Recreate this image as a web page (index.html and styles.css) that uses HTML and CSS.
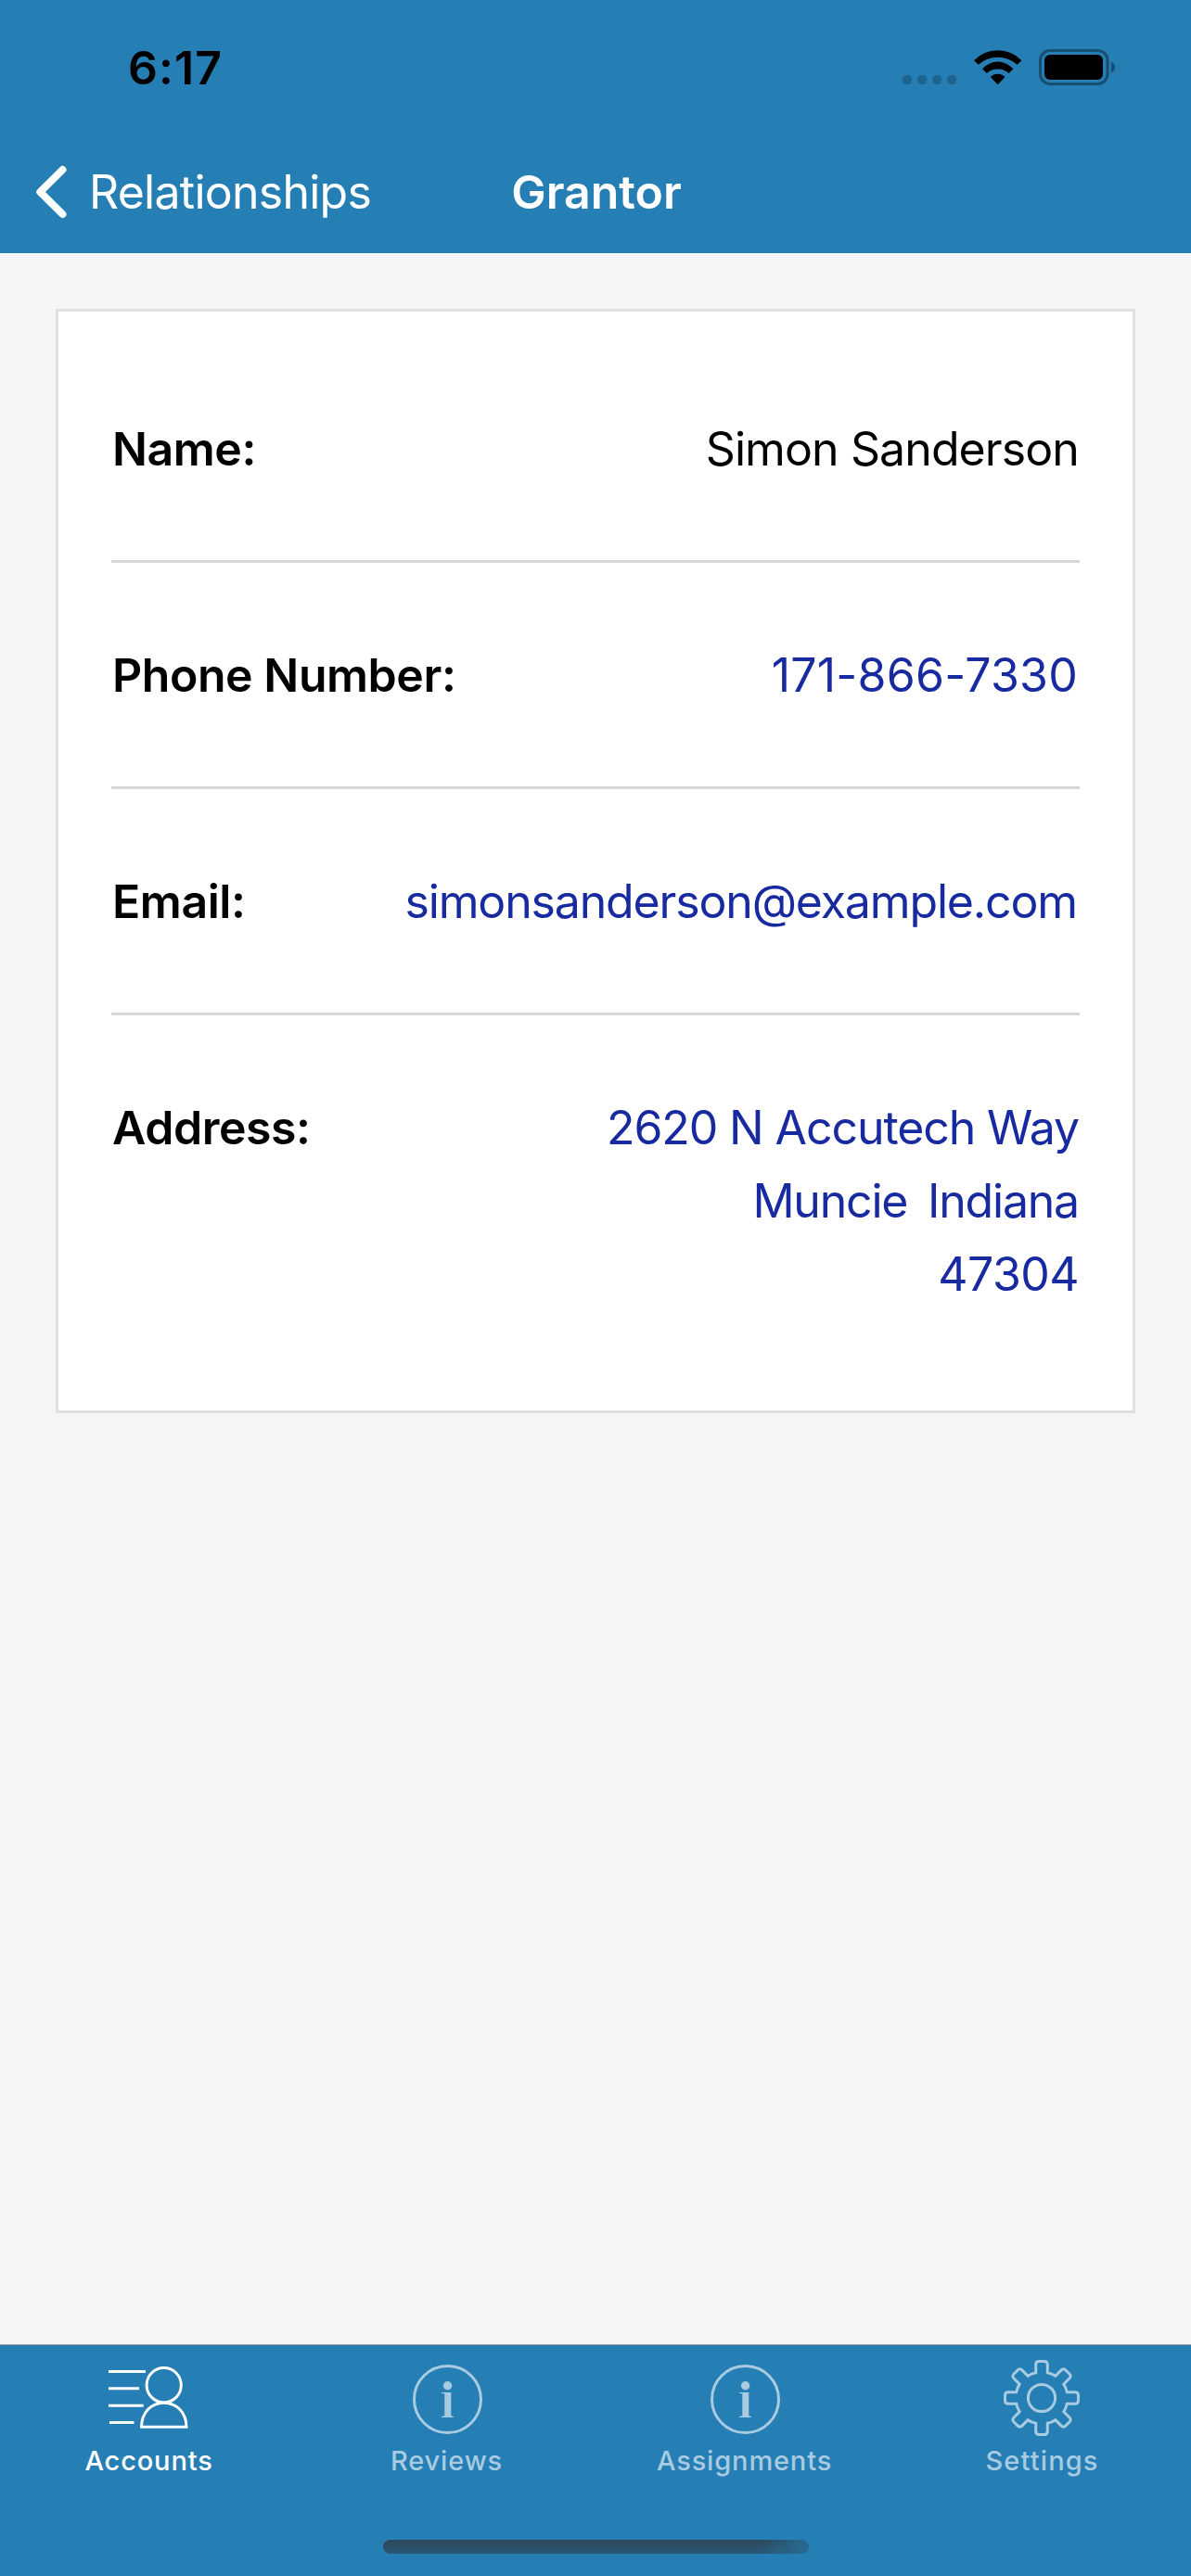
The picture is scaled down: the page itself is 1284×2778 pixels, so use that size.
FILE: index.html
```html
<!DOCTYPE html>
<html lang="en">
<head>
<meta charset="utf-8">
<title>Grantor</title>
<link rel="stylesheet" href="styles.css">
</head>
<body>
<div class="screen">
  <header class="header">
    <div class="status">
      <span class="status__time">6:17</span>
      <div class="status__icons">
        <svg class="status__dots" width="58" height="39" viewBox="0 0 58 39">
          <rect x="0" y="28" width="10" height="10" rx="4.2"/>
          <rect x="16.2" y="28" width="10" height="10" rx="4.2"/>
          <rect x="32.3" y="28" width="10" height="10" rx="4.2"/>
          <rect x="48.2" y="28" width="10" height="10" rx="4.2"/>
        </svg>
        <svg width="52" height="39" viewBox="0 -1 52 39">
          <path d="M0 11.200A35.500 35.500 0 0 1 51.400 11.200L46.600 15.700A31.600 31.600 0 0 0 4.800 15.700Z"/>
          <path d="M9 20.300A22 22 0 0 1 42.400 20.300L37.600 25A18 18 0 0 0 13.800 25Z"/>
          <path d="M17.800 29A11 11 0 0 1 33.600 29L25.700 37.200Z"/>
        </svg>
        <svg width="82" height="39" viewBox="0 0 82 39">
          <rect class="battery__case" x="1.500" y="1.500" width="72.500" height="36" rx="10.500"/>
          <rect x="6" y="6" width="63" height="27" rx="6"/>
          <path class="battery__tip" d="M78 13.500Q82 15.500 82 19.500Q82 23.500 78 25.500Z"/>
        </svg>
      </div>
    </div>
    <nav class="nav">
      <a class="nav__back">
        <svg width="42" height="64" viewBox="0 0 42 64"><path d="M32.500 8L8.300 32L32.500 56"/></svg>
        <span>Relationships</span>
      </a>
      <h1 class="nav__title">Grantor</h1>
    </nav>
  </header>

  <main class="content">
    <dl class="card">
      <div class="row">
        <dt class="row__label">Name:</dt>
        <dd class="row__value">Simon Sanderson</dd>
      </div>
      <div class="row">
        <dt class="row__label">Phone Number:</dt>
        <dd class="row__value row__value--link row__value--phone">171-866-7330</dd>
      </div>
      <div class="row">
        <dt class="row__label">Email:</dt>
        <dd class="row__value row__value--link row__value--email">simonsanderson@example.com</dd>
      </div>
      <div class="row">
        <dt class="row__label">Address:</dt>
        <dd class="row__value row__value--link">
          <div class="address__street">2620 N Accutech Way</div>
          <div class="address__city">Muncie&nbsp; Indiana</div>
          <div class="address__zip">47304</div>
        </dd>
      </div>
    </dl>
  </main>

  <footer class="tabbar">
    <div class="tabs">
      <a class="tab tab--active">
        <svg width="91" height="90" viewBox="0 0 91 90">
          <path d="M2 16.600H42M2 34.800H35M2 53.300H39.700M3 71.500H29.500"/>
          <circle cx="61.700" cy="31.200" r="18.600"/>
          <path d="M37.500 76.300C37.500 60.500 48.500 50.200 61.700 50.200S86 60.500 86 76.300Z"/>
        </svg>
        <span class="tab__label">Accounts</span>
      </a>
      <a class="tab">
        <svg width="91" height="90" viewBox="0 0 91 90">
          <circle cx="46.500" cy="46.500" r="36"/>
          <circle class="solid" cx="46.600" cy="31.800" r="4.700"/>
          <path class="solid" d="M40 39H50.300V64.300L53 65V66H40V65L43.300 64.300V40.500L40 40Z"/>
        </svg>
        <span class="tab__label">Reviews</span>
      </a>
      <a class="tab">
        <svg width="91" height="90" viewBox="0 0 91 90">
          <circle cx="46.500" cy="46.500" r="36"/>
          <circle class="solid" cx="46.600" cy="31.800" r="4.700"/>
          <path class="solid" d="M40 39H50.300V64.300L53 65V66H40V65L43.300 64.300V40.500L40 40Z"/>
        </svg>
        <span class="tab__label">Assignments</span>
      </a>
      <a class="tab">
        <svg width="91" height="90" viewBox="0 0 91 90">
          <g class="gear" transform="translate(45 45)">
            <circle r="14.600"/>
            <path d="M-6.300 -27.300V-36Q-6.300 -39.500 -2.800 -39.500H2.800Q6.300 -39.500 6.300 -36V-27.300Q11.200 -26.300 14.850 -23.760L21 -29.910Q23.480 -32.390 25.950 -29.910L29.910 -25.950Q32.390 -23.480 29.910 -21L23.760 -14.850Q26.300 -11.200 27.300 -6.300H36Q39.500 -6.300 39.500 -2.800V2.800Q39.500 6.300 36 6.300H27.300Q26.300 11.200 23.760 14.850L29.910 21Q32.390 23.480 29.910 25.950L25.950 29.910Q23.480 32.390 21 29.910L14.850 23.760Q11.200 26.300 6.300 27.300V36Q6.300 39.500 2.800 39.500H-2.800Q-6.300 39.500 -6.300 36V27.300Q-11.200 26.300 -14.850 23.760L-21 29.910Q-23.480 32.390 -25.950 29.910L-29.910 25.950Q-32.390 23.480 -29.910 21L-23.760 14.850Q-26.300 11.200 -27.300 6.300H-36Q-39.500 6.300 -39.500 2.800V-2.800Q-39.500 -6.300 -36 -6.300H-27.300Q-26.300 -11.200 -23.760 -14.850L-29.910 -21Q-32.390 -23.480 -29.910 -25.950L-25.950 -29.910Q-23.480 -32.390 -21 -29.910L-14.850 -23.760Q-11.200 -26.300 -6.300 -27.300Z"/>
          </g>
        </svg>
        <span class="tab__label tab__label--wide">Settings</span>
      </a>
    </div>
    <div class="home-indicator"></div>
  </footer>
</div>
</body>
</html>
```
FILE: styles.css
```css
* { box-sizing: border-box; margin: 0; padding: 0; }

body {
  font-family: Inter, "Liberation Sans", sans-serif;
  font-size: 50px;
  line-height: 60px;
  color: #000;
  background: #f5f5f5;
}

svg { display: block; flex: none; }

.screen {
  display: flex;
  flex-direction: column;
  width: 1284px;
  height: 2778px;
  background: #f5f5f5;
}

/* Header: status bar and navigation */
.header { height: 273px; background: #257eb4; }

.status {
  display: flex;
  justify-content: space-between;
  height: 141px;
  padding: 43px 82px 0 138px;
}
.status__time { font-weight: 600; letter-spacing: 1.1px; }
.status__icons { display: flex; gap: 18.500px; padding-top: 10px; }
.status__dots { fill: #1e6490; }
.battery__case { fill: none; stroke: #184f71; stroke-width: 3; }
.battery__tip { fill: #184f71; }

.nav {
  display: grid;
  grid-template-columns: 1fr auto 1fr;
  align-items: center;
  height: 132px;
  padding: 0 35px;
  color: #fff;
}
.nav__back {
  display: flex;
  align-items: center;
  gap: 19px;
  letter-spacing: -0.75px;
}
.nav__back path {
  fill: none;
  stroke: #fff;
  stroke-width: 8;
  stroke-linecap: round;
  stroke-linejoin: round;
}
.nav__title { font-size: 50px; font-weight: 600; padding-left: 2px; }

/* Contact card */
.content { flex: 1; padding: 60px; }

.card {
  padding: 27px 57px;
  background: #fff;
  border: 3px solid #e0e0e0;
}
.row {
  display: flex;
  justify-content: space-between;
  padding: 82px 0 80px;
  line-height: 79px;
  border-bottom: 3px solid #d6d6d6;
}
.row:last-child { border-bottom: 0; }
.row__label { font-weight: 600; letter-spacing: -0.45px; padding-left: 1px; }
.row__value { text-align: right; letter-spacing: -0.9px; padding-right: 1px; }
.row__value--link { color: #182aa0; }
.row__value--phone { letter-spacing: 0.23px; padding-right: 2px; }
.row__value--email { letter-spacing: -1.15px; padding-right: 3px; }
.address__street { letter-spacing: -1.1px; }
.address__city { letter-spacing: -1.2px; word-spacing: -2px; }
.address__zip { letter-spacing: -0.55px; }

/* Bottom tab bar */
.tabbar {
  display: flex;
  flex-direction: column;
  justify-content: space-between;
  align-items: center;
  height: 250px;
  padding: 12px 0 24px;
  background: #257eb4;
  border-top: 1px solid #a3a6a8;
}
.tabs { display: grid; grid-template-columns: repeat(4, 1fr); width: 100%; }
.tab {
  display: flex;
  flex-direction: column;
  align-items: center;
  gap: 5px;
  color: #a8cbe1;
}
.tab--active { color: #fff; }
.tab svg { fill: none; stroke: currentColor; stroke-width: 3; }
.tab .solid { fill: currentColor; stroke: none; }
.gear { stroke-width: 3; }
.tab__label {
  font-size: 29px;
  font-weight: 500;
  line-height: 35px;
  letter-spacing: 0.85px;
}
.tab__label--wide { letter-spacing: 1.15px; }
.home-indicator {
  width: 459px;
  height: 15px;
  border-radius: 8px;
  background:
    linear-gradient(100deg, transparent 88%, #286991 99%),
    linear-gradient(#2d4759, #2a5875);
}
```
